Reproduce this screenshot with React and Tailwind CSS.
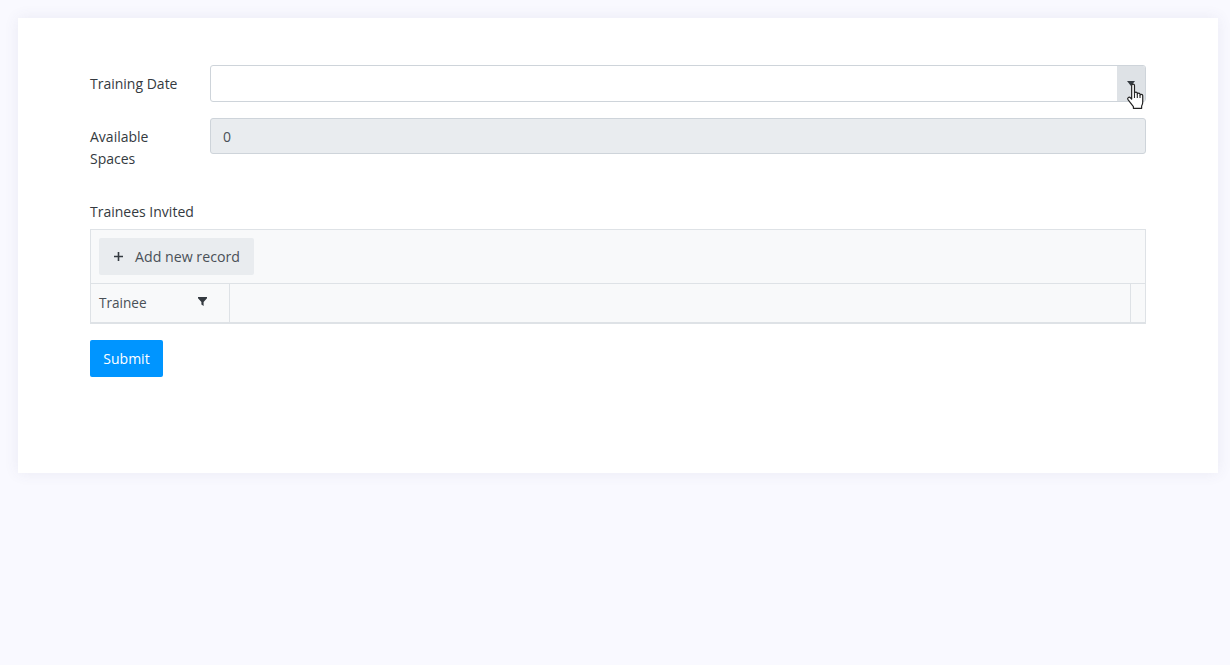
import React from "react";

const font = { fontFamily: '"Open Sans", "Noto Sans", sans-serif' };

function HandCursor() {
  return (
    <svg className="absolute left-[9px] top-[17px]" width="20" height="26" viewBox="0 0 18 24">
      <path
        d="M5 2.2c0-1.6 2.6-1.6 2.6 0v7.2c0-1.4 2.6-1.4 2.6 0v1c0-1.4 2.5-1.4 2.5 0v1c0-1.3 2.5-1.3 2.5.2v6.2c0 1.4-.4 2.4-1 3.4v2.2H6.6v-1.6L1.6 15.4c-1-1.4.9-3 2.2-1.8L5 14.8z"
        fill="#fff"
        stroke="#222"
        strokeWidth="1.1"
        strokeLinejoin="round"
      />
      <path d="M7.6 9.4v4.4M10.2 10.4v3.4M12.7 11.4v2.4" stroke="#222" strokeWidth="1" fill="none" />
    </svg>
  );
}

function Label({ className, children }) {
  return <label className={`block w-[120px] shrink-0 pr-6 text-[14px] leading-[22px] font-medium text-[#343a40] ${className}`}>{children}</label>;
}

export default function App() {
  return (
    <div className="min-h-screen bg-[#f9f9ff] pt-[18px] pr-[12px] pl-[18px] text-[#343a40]" style={font}>
      <div className="h-[455px] bg-white px-[72px] pt-[47px] shadow-[0_0_14px_rgba(80,80,120,0.09)]">
        <div className="flex items-start">
          <Label className="pt-[8px]">Training Date</Label>
          <div className="flex h-[37px] flex-1 rounded-[3px] border border-[#ced4da] bg-white">
            <div className="flex-1" />
            <div className="relative flex w-[28px] justify-center rounded-r-[2px] bg-[#dee2e6]">
              <span className="mt-[15px] h-0 w-0 border-x-[4px] border-t-[5px] border-x-transparent border-t-[#343a40]" />
              <HandCursor />
            </div>
          </div>
        </div>

        <div className="mt-[16px] flex items-start">
          <Label className="pt-[8px]">Available Spaces</Label>
          <div className="flex h-[36px] flex-1 items-center rounded-[3px] border border-[#ced4da] bg-[#e9ecef] px-3 text-[14px] text-[#495057]">
            0
          </div>
        </div>

        <div className="mt-[31px] text-[14px] leading-[22px] font-medium">Trainees Invited</div>

        <div className="mt-[6px] border border-b-2 border-[#dee2e6] bg-[#f8f9fa]">
          <div className="border-b border-[#dee2e6] py-[8px] pl-[8px]">
            <button className="flex h-[37px] w-[155px] items-center rounded-[2px] bg-[#e9ecef] pl-[14px] text-[14.2px] text-[#495057]">
              <svg width="11" height="11" viewBox="0 0 11 11" className="mr-[11px]">
                <path d="M5.5 1v9M1 5.5h9" stroke="#343a40" strokeWidth="1.6" />
              </svg>
              Add new record
            </button>
          </div>
          <div className="flex h-[38px]">
            <div className="relative flex w-[139px] items-center border-r border-[#dee2e6] pl-[8px] text-[13.6px] text-[#495057]">
              Trainee
              <svg width="9" height="9" viewBox="0 0 9 9" className="absolute left-[107px] top-[13px]">
                <path d="M0 0h9v1.2L5.6 5v4L3.4 7.6V5L0 1.2z" fill="#343a40" />
              </svg>
            </div>
            <div className="flex-1 border-r border-[#dee2e6]" />
            <div className="w-[14px]" />
          </div>
        </div>

        <button className="mt-[16px] h-[37px] w-[73px] rounded-[2px] bg-[#0095ff] text-[14px] text-white">Submit</button>
      </div>
    </div>
  );
}
